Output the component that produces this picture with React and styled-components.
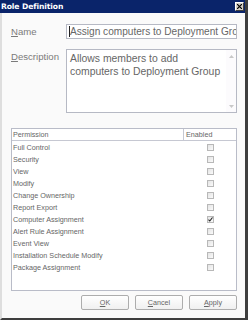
import React from 'react';
import styled, { createGlobalStyle } from 'styled-components';

const GlobalStyle = createGlobalStyle`
  html, body {
    margin: 0;
    padding: 0;
    background: #ffffff;
  }
  * {
    box-sizing: border-box;
  }
`;

const permissions = [
  { name: 'Full Control', enabled: false },
  { name: 'Security', enabled: false },
  { name: 'View', enabled: false },
  { name: 'Modify', enabled: false },
  { name: 'Change Ownership', enabled: false },
  { name: 'Report Export', enabled: false },
  { name: 'Computer Assignment', enabled: true },
  { name: 'Alert Rule Assignment', enabled: false },
  { name: 'Event View', enabled: false },
  { name: 'Installation Schedule Modify', enabled: false },
  { name: 'Package Assignment', enabled: false },
];

const RoleDefinition = () => {
  return (
    <Window>
      <TitleBar>
        <Title>Role Definition</Title>
        <CloseButton>
          <svg width="5" height="5" viewBox="0 0 5 5">
            <path d="M0 0 L5 5 M5 0 L0 5" stroke="#000" strokeWidth="1.2" />
          </svg>
        </CloseButton>
      </TitleBar>

      <Body>
        <FieldRow>
          <Label><u>N</u>ame</Label>
          <TextBox>
            <Caret />
            <span>Assign computers to Deployment Group</span>
          </TextBox>
        </FieldRow>

        <FieldRow $gap={10}>
          <Label $top><u>D</u>escription</Label>
          <TextArea>
            <AreaText>Allows members to add computers to Deployment Group</AreaText>
            <ScrollTrack>
              <svg width="5" height="3" viewBox="0 0 5 3"><path d="M0 3 L2.5 0 L5 3 Z" fill="#c8c8c8" /></svg>
              <svg width="5" height="3" viewBox="0 0 5 3"><path d="M0 0 L2.5 3 L5 0 Z" fill="#c8c8c8" /></svg>
            </ScrollTrack>
          </TextArea>
        </FieldRow>

        <Grid>
          <HeaderRow>
            <HeaderCell>Permission</HeaderCell>
            <HeaderCell $divider>Enabled</HeaderCell>
          </HeaderRow>
          {permissions.map((p) => (
            <Row key={p.name}>
              <Cell>{p.name}</Cell>
              <CheckCell>
                <CheckBox>
                  {p.enabled && (
                    <svg width="5" height="5" viewBox="0 0 5 5">
                      <path d="M0.5 2.6 L1.8 4 L4.5 0.5" stroke="#222" strokeWidth="1.1" fill="none" />
                    </svg>
                  )}
                </CheckBox>
              </CheckCell>
            </Row>
          ))}
        </Grid>

        <ButtonBar>
          <Button><u>O</u>K</Button>
          <Button><u>C</u>ancel</Button>
          <Button><u>A</u>pply</Button>
        </ButtonBar>
      </Body>
    </Window>
  );
};

const Window = styled.div`
  width: 248px;
  height: 320px;
  display: flex;
  flex-direction: column;
  background: #fafafa;
  border-left: 2px solid #dedede;
  border-right: 3px solid #3e3e3e;
  border-bottom: 2px solid #3e3e3e;
  font-family: 'Liberation Sans', Arial, sans-serif;
`;

const TitleBar = styled.div`
  height: 13px;
  flex: none;
  display: flex;
  align-items: center;
  justify-content: space-between;
  background: #0a246a;
  margin-left: -2px;
  padding: 0 1px 0 1px;
`;

const Title = styled.span`
  color: #ffffff;
  font-family: Tahoma, 'DejaVu Sans', sans-serif;
  font-weight: bold;
  font-size: 7.6px;
  letter-spacing: -0.1px;
`;

const CloseButton = styled.div`
  width: 9px;
  height: 9px;
  display: flex;
  align-items: center;
  justify-content: center;
  background: #d4d0c8;
  border: 1px solid;
  border-color: #ffffff #404040 #404040 #ffffff;
`;

const Body = styled.div`
  flex: 1;
  display: flex;
  flex-direction: column;
  padding: 11px 8px 0 9px;
`;

const FieldRow = styled.div`
  display: grid;
  grid-template-columns: 55px 171px;
  align-items: ${(p) => (p.$gap ? 'start' : 'center')};
  margin-top: ${(p) => p.$gap || 0}px;
`;

const Label = styled.div`
  font-size: 9.6px;
  color: #7a7a7a;
  padding-top: ${(p) => (p.$top ? '2px' : '0')};
  u {
    text-decoration-thickness: 1px;
  }
`;

const TextBox = styled.div`
  height: 15px;
  display: flex;
  align-items: center;
  padding-left: 2px;
  border: 1px solid #b6b9c4;
  background: #ffffff;
  overflow: hidden;
  white-space: nowrap;
  font-size: 10.1px;
  color: #666;
`;

const Caret = styled.span`
  width: 1px;
  height: 11px;
  background: #222;
  flex: none;
`;

const TextArea = styled.div`
  height: 64px;
  display: flex;
  border: 1px solid #b6b9c4;
  background: #ffffff;
`;

const AreaText = styled.div`
  flex: 1;
  padding: 2px 0 0 3px;
  font-size: 10.4px;
  line-height: 13px;
  color: #666;
`;

const ScrollTrack = styled.div`
  width: 10px;
  display: flex;
  flex-direction: column;
  justify-content: space-between;
  align-items: center;
  padding: 5px 0 4px;
  background: #fcfbfd;
`;

const Grid = styled.div`
  margin-top: 15px;
  width: 226px;
  height: 163px;
  border: 1px solid #b9bcc8;
  background: #ffffff;
  display: flex;
  flex-direction: column;
`;

const HeaderRow = styled.div`
  height: 12px;
  display: grid;
  grid-template-columns: 171px 1fr;
  border-bottom: 1px solid #c6c8d2;
`;

const HeaderCell = styled.div`
  display: flex;
  align-items: center;
  padding-left: ${(p) => (p.$divider ? '2px' : '1px')};
  border-left: ${(p) => (p.$divider ? '1px solid #c6c8d2' : 'none')};
  font-size: 7.2px;
  color: #666;
`;

const Row = styled.div`
  height: 12px;
  display: grid;
  grid-template-columns: 171px 1fr;
  align-items: center;
`;

const Cell = styled.div`
  padding-left: 1px;
  font-size: 7.2px;
  color: #666;
  white-space: nowrap;
`;

const CheckCell = styled.div`
  display: flex;
  justify-content: center;
  padding-left: 2px;
`;

const CheckBox = styled.div`
  width: 7px;
  height: 7px;
  display: flex;
  align-items: center;
  justify-content: center;
  border: 1px solid #b8b8b8;
  background: linear-gradient(135deg, #e4e4e4, #fafafa);
`;

const ButtonBar = styled.div`
  margin-top: 4px;
  width: 226px;
  display: flex;
  justify-content: flex-end;
  gap: 6px;
`;

const Button = styled.div`
  width: 48px;
  height: 15px;
  display: flex;
  align-items: center;
  justify-content: center;
  border: 1px solid #adadad;
  border-radius: 2px;
  background: linear-gradient(#ffffff, #f0f0f0);
  font-size: 7.2px;
  color: #666;
`;

export default function App() {
  return (
    <>
      <GlobalStyle />
      <RoleDefinition />
    </>
  );
}
